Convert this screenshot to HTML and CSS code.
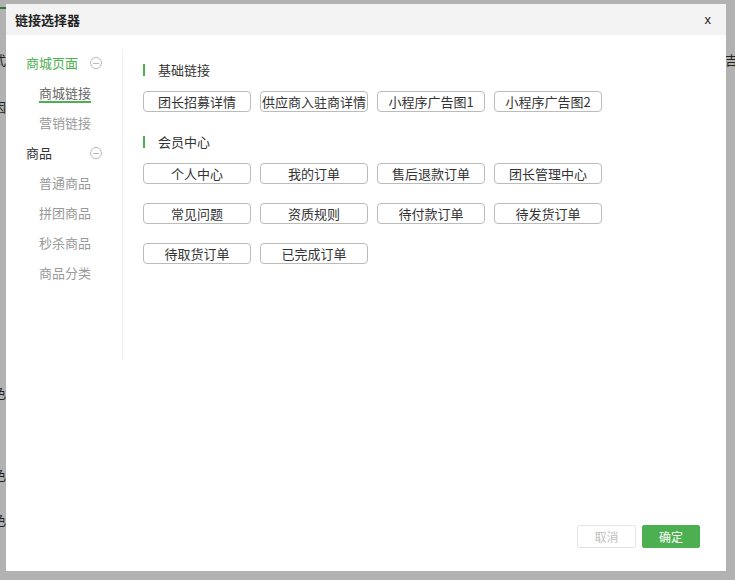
FILE: index.html
```html
<!DOCTYPE html>
<html lang="zh-CN">
<head>
<meta charset="utf-8">
<title>链接选择器</title>
<link rel="stylesheet" href="styles.css">
</head>
<body>
<div class="page">
  <span class="bg-line"></span>
  <span class="bg-char c1">式</span>
  <span class="bg-char c2">因</span>
  <span class="bg-char c3">吉</span>
  <span class="bg-char c4">色</span>
  <span class="bg-char c5">色</span>
  <span class="bg-char c6">色</span>
</div>
<div class="mask"></div>
<div class="modal">
  <div class="modal-header">
    <span class="modal-title">链接选择器</span>
    <span class="modal-close">x</span>
  </div>
  <div class="modal-body">
    <ul class="menu">
      <li class="menu-group active"><span>商城页面</span><i class="fold"></i></li>
      <li class="menu-item current"><span>商城链接</span></li>
      <li class="menu-item"><span>营销链接</span></li>
      <li class="menu-group"><span>商品</span><i class="fold"></i></li>
      <li class="menu-item"><span>普通商品</span></li>
      <li class="menu-item"><span>拼团商品</span></li>
      <li class="menu-item"><span>秒杀商品</span></li>
      <li class="menu-item"><span>商品分类</span></li>
    </ul>
    <div class="content">
      <div class="section">
        <div class="section-title">基础链接</div>
        <div class="links">
          <span class="link">团长招募详情</span>
          <span class="link">供应商入驻商详情</span>
          <span class="link">小程序广告图1</span>
          <span class="link">小程序广告图2</span>
        </div>
      </div>
      <div class="section">
        <div class="section-title">会员中心</div>
        <div class="links">
          <span class="link">个人中心</span>
          <span class="link">我的订单</span>
          <span class="link">售后退款订单</span>
          <span class="link">团长管理中心</span>
          <span class="link">常见问题</span>
          <span class="link">资质规则</span>
          <span class="link">待付款订单</span>
          <span class="link">待发货订单</span>
          <span class="link">待取货订单</span>
          <span class="link">已完成订单</span>
        </div>
      </div>
    </div>
  </div>
  <div class="modal-footer">
    <button class="btn btn-cancel">取消</button>
    <button class="btn btn-ok">确定</button>
  </div>
</div>
</body>
</html>
```
FILE: styles.css
```css
* { box-sizing: border-box; }
html, body {
  margin: 0;
  padding: 0;
  width: 735px;
  height: 580px;
  overflow: hidden;
  font-family: "Noto Sans CJK SC", "Microsoft YaHei", sans-serif;
  font-size: 13px;
  color: #333;
  background: #fff;
}
.page {
  position: relative;
  width: 735px;
  height: 580px;
}
.bg-line {
  position: absolute;
  left: 0;
  top: 7px;
  width: 10px;
  height: 2px;
  background: #4caf50;
}
.bg-char {
  position: absolute;
  font-size: 13px;
  color: #333;
  line-height: 16px;
}
.c1 { left: -7px; top: 52px; }
.c2 { left: -7px; top: 99px; }
.c3 { left: 725px; top: 52px; }
.c4 { left: -7px; top: 385px; }
.c5 { left: -7px; top: 467px; }
.c6 { left: -7px; top: 512px; }
.mask {
  position: absolute;
  inset: 0;
  background: rgba(0, 0, 0, 0.3);
}
.modal {
  position: absolute;
  left: 6px;
  top: 4px;
  width: 720px;
  height: 567px;
  background: #fff;
  display: flex;
  flex-direction: column;
}
.modal-header {
  height: 31px;
  background: #f3f3f3;
  display: flex;
  align-items: center;
  justify-content: space-between;
  padding: 0 15px 0 9px;
}
.modal-title {
  font-size: 13px;
  font-weight: 700;
  color: #222;
}
.modal-close {
  font-family: "Liberation Sans", Arial, sans-serif;
  font-size: 13px;
  color: #222;
}
.modal-body {
  flex: 1;
  display: flex;
  align-items: flex-start;
  padding-top: 12px;
}
.menu {
  list-style: none;
  margin: 2px 0 0;
  padding: 0;
  width: 117px;
  min-height: 311px;
  border-right: 1px solid #f0f0f0;
}
.menu li {
  height: 30px;
  display: flex;
  align-items: center;
  position: relative;
  top: -2px;
}
.menu-group {
  padding-left: 20px;
  color: #333;
}
.menu-group.active { color: #4caf50; }
.fold {
  position: absolute;
  left: 84px;
  top: 10px;
  width: 12px;
  height: 12px;
  border: 1px solid #bbb;
  border-radius: 50%;
}
.fold::after {
  content: "";
  position: absolute;
  left: 2px;
  top: 4.5px;
  width: 6px;
  height: 1px;
  background: #bbb;
}
.menu-item {
  padding-left: 33px;
  color: #999;
}
.menu-item.current { color: #666; }
.menu-item.current span {
  border-bottom: 2px solid #4caf50;
  line-height: 17px;
  padding-top: 2px;
}
.content {
  flex: 1;
  padding: 12px 0 0 20px;
}
.section { margin-bottom: 19px; }
.section-title {
  height: 20px;
  display: flex;
  align-items: center;
  color: #333;
  margin-bottom: 12px;
}
.section-title::before {
  content: "";
  width: 2px;
  height: 12px;
  background: #4caf50;
  margin-right: 13px;
  position: relative;
  top: 1px;
}
.links {
  display: grid;
  grid-template-columns: repeat(4, 108px);
  column-gap: 9px;
  row-gap: 19px;
}
.link {
  height: 21px;
  border: 1px solid #bbb;
  border-radius: 4px;
  display: flex;
  align-items: center;
  justify-content: center;
  color: #333;
  white-space: nowrap;
  overflow: hidden;
}
.modal-footer {
  display: flex;
  justify-content: flex-end;
  gap: 6px;
  padding: 0 26px 23px 0;
}
.btn {
  height: 23px;
  font-family: inherit;
  font-size: 12px;
  border-radius: 2px;
  padding: 0;
  cursor: pointer;
}
.btn-cancel {
  width: 59px;
  background: #fff;
  border: 1px solid #e4e4e4;
  color: #c0c0c0;
}
.btn-ok {
  width: 58px;
  background: #4caf50;
  border: 1px solid #4caf50;
  color: #fff;
}
```
